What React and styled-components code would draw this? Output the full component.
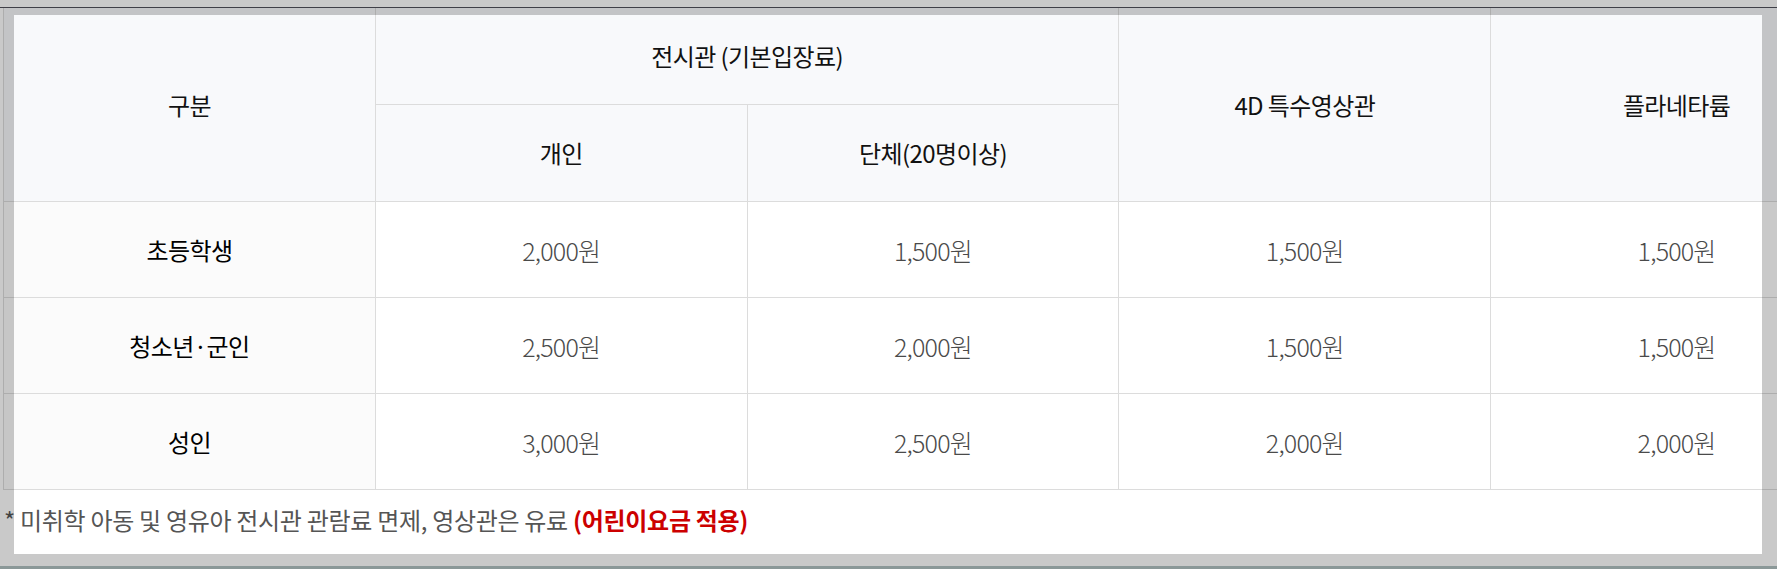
import React from "react"
import styled, { createGlobalStyle } from "styled-components"

const GlobalStyle = createGlobalStyle`
    html, body {
        margin: 0;
        padding: 0;
        background: #fff;
        overflow: hidden;
        font-family: "Noto Sans CJK KR", "Noto Sans", sans-serif;
    }
`

const Page = styled.div`
    width: 1777px;
    height: 569px;
    padding-top: 7px;
    box-sizing: border-box;
`

const TableWrap = styled.div`
    border-top: 1px solid #50505a;
    padding-left: 3px;
`

const PriceTable = styled.table`
    width: 1860px;
    border-collapse: collapse;
    table-layout: fixed;
    border-left: 1px solid #dcdcdc;
`

const Head = styled.th`
    height: ${(p) => (p.tall ? "193px" : "95px")};
    padding: 0;
    background: #f8f9fb;
    border: 1px solid #dcdcdc;
    border-top: 0;
    color: #111;
    font-size: 24px;
    font-weight: 400;
    letter-spacing: -0.6px;
    text-align: center;
    vertical-align: middle;
`

const RowHead = styled.th`
    height: 95px;
    padding: 0;
    background: #fbfbfb;
    border: 1px solid #dcdcdc;
    color: #000;
    font-size: 24px;
    font-weight: 400;
    letter-spacing: -0.6px;
    text-align: center;
`

const Cell = styled.td`
    height: 95px;
    padding: 0;
    background: #fff;
    border: 1px solid #dcdcdc;
    color: #4a4a4a;
    font-size: 25px;
    font-weight: 300;
    letter-spacing: -0.8px;
    text-align: center;
`

const Note = styled.p`
    margin: 14px 0 0 4px;
    font-size: 24px;
    line-height: 32px;
    color: #555;
    letter-spacing: -0.3px;
`

const Accent = styled.strong`
    color: #cc0000;
    font-weight: 700;
`

const Frame = styled.div`
    position: fixed;
    inset: 0;
    border-style: solid;
    border-color: rgba(0, 0, 0, 0.21);
    border-width: 15px 15px 15px 14px;
    pointer-events: none;

    &::after {
        content: "";
        position: absolute;
        left: -14px;
        right: -15px;
        bottom: -15px;
        height: 3px;
        background: #8b9898;
    }
`

const rows = [
    { name: "초등학생", prices: ["2,000원", "1,500원", "1,500원", "1,500원"] },
    { name: "청소년·군인", prices: ["2,500원", "2,000원", "1,500원", "1,500원"] },
    { name: "성인", prices: ["3,000원", "2,500원", "2,000원", "2,000원"] },
]

const App = () => {
    return (
        <Page>
            <GlobalStyle />
            <TableWrap>
                <PriceTable>
                    <thead>
                        <tr>
                            <Head rowSpan={2} tall>구분</Head>
                            <Head colSpan={2}>전시관 (기본입장료)</Head>
                            <Head rowSpan={2} tall>4D 특수영상관</Head>
                            <Head rowSpan={2} tall>플라네타륨</Head>
                        </tr>
                        <tr>
                            <Head>개인</Head>
                            <Head>단체(20명이상)</Head>
                        </tr>
                    </thead>
                    <tbody>
                        {rows.map((row) => (
                            <tr key={row.name}>
                                <RowHead>{row.name}</RowHead>
                                {row.prices.map((price, i) => (
                                    <Cell key={i}>{price}</Cell>
                                ))}
                            </tr>
                        ))}
                    </tbody>
                </PriceTable>
            </TableWrap>
            <Note>
                * 미취학 아동 및 영유아 전시관 관람료 면제, 영상관은 유료 <Accent>(어린이요금 적용)</Accent>
            </Note>
            <Frame />
        </Page>
    )
}

export default App
